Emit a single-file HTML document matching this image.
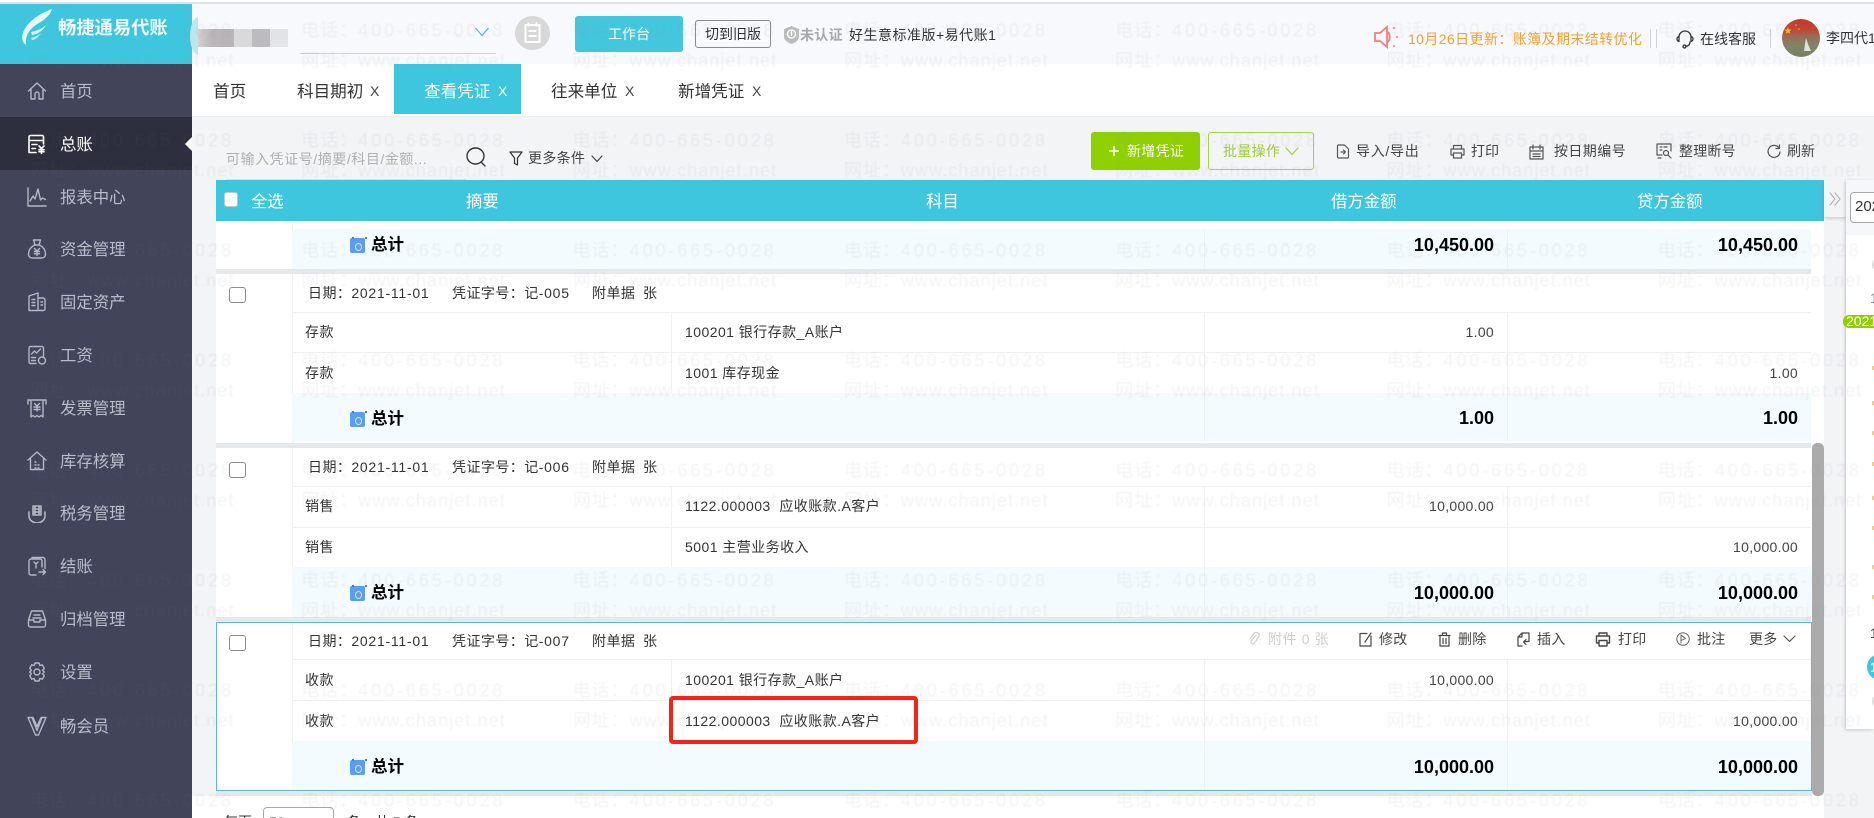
<!DOCTYPE html>
<html lang="zh-CN"><head><meta charset="utf-8"><title>畅捷通易代账</title>
<style>
*{box-sizing:border-box}
html,body{margin:0;padding:0;width:1874px;height:818px;overflow:hidden;background:#fff}
body{position:relative;font-family:"Liberation Sans","Noto Sans CJK SC",sans-serif;font-size:14px;color:#333}
.a{position:absolute}
.t{position:absolute;white-space:nowrap;line-height:20px}
.nav{position:absolute;left:60px;margin-top:.5px;white-space:nowrap;line-height:20px;font-size:16.400px;color:#b9bcc9}
.ni{position:absolute;left:27px;width:20px;height:20px;fill:none;stroke:#b4b7c4;stroke-width:1.4;stroke-linecap:round;stroke-linejoin:round}
.ic{position:absolute;fill:none;stroke:#555;stroke-width:1.2;stroke-linecap:round;stroke-linejoin:round}
.tab{position:absolute;top:81.500px;font-size:16.600px;line-height:20px;white-space:nowrap;color:#333}
.x{position:absolute;top:81px;font-size:14px;line-height:20px;color:#444}
.tb{position:absolute;top:141px;line-height:20px;white-space:nowrap;color:#444;letter-spacing:.7px}
.th{position:absolute;top:191px;font-size:16.400px;line-height:22px;color:#fff;white-space:nowrap}
.hl{position:absolute;left:292px;width:1519px;height:1px;background:#eef0f2}
.vl{position:absolute;width:1px;background:#eef1f3}
.tot{position:absolute;left:292px;width:1519px;background:#f3fbfe}
.gap{position:absolute;left:216px;width:1595px;background:#e6e9ec}
.cb{position:absolute;left:229px;width:17px;height:16px;border:1px solid #8b8b8b;border-radius:3px;background:#fff}
.d{position:absolute;white-space:nowrap;line-height:20px;font-size:14px;color:#333;letter-spacing:.45px}
.dig{letter-spacing:.75px}
.am{position:absolute;white-space:nowrap;line-height:20px;font-size:14px;color:#444;letter-spacing:.3px;text-align:right}
.zj{position:absolute;left:371px;font-size:16.500px;font-weight:700;line-height:20px;color:#000;white-space:nowrap;margin-top:1px}
.ta{position:absolute;font-size:18px;font-weight:700;line-height:22px;color:#000;white-space:nowrap}
.cal{position:absolute;left:350px;width:15px;height:15px;background:#5b9df0;border-radius:2px;margin-top:1px}
.cal:before{content:"";position:absolute;left:5px;top:5px;width:5px;height:6px;border:1px solid #d5e6fb;border-radius:50%}
.cal:after{content:"";position:absolute;left:2px;top:-1px;width:11px;height:2px;border-left:2px solid #3f7fd0;border-right:2px solid #3f7fd0}
.act{position:absolute;top:629px;line-height:20px;white-space:nowrap;color:#444;letter-spacing:.2px}
</style></head><body>

<!-- base layers -->
<div class="a" style="left:0;top:2px;width:1874px;height:2px;background:#dfe1e4"></div>
<div class="a" style="left:192px;top:4px;width:1682px;height:60px;background:#f8f9fc"></div>
<div class="a" style="left:192px;top:117px;width:1682px;height:679px;background:#f3f4f6"></div>
<div class="a" style="left:192px;top:116px;width:1682px;height:1px;background:#ececee"></div>
<div class="a" style="left:1824px;top:796px;width:50px;height:22px;background:#f3f4f6"></div>

<!-- sidebar -->
<div class="a" style="left:0;top:4px;width:192px;height:60px;background:#3dc6dd"></div>
<div class="a" style="left:0;top:64px;width:192px;height:754px;background:#424459"></div>
<div class="a" style="left:0;top:117px;width:192px;height:53px;background:#2d2f3e"></div>
<div class="a" style="left:185px;top:137px;width:0;height:0;border-top:7px solid transparent;border-bottom:7px solid transparent;border-right:7px solid #fff"></div>
<svg class="a" style="left:18px;top:6px" width="40" height="42" viewBox="18 6 40 42">
<path d="M52 9C41 13 27 21 23 33C21 39 23 43 26 45C25 38 28 30 36 25C44 20 50 16 52 9Z" fill="#fff" opacity=".88"/>
<path d="M31 32C37 31 43 28 46 25C43 31 38 34 32 35Z" fill="#fff" opacity=".8"/>
<path d="M31 38C35 37 39 35 41 33C39 37 35 40 32 40Z" fill="#fff" opacity=".7"/>
</svg>
<div class="t" style="left:58px;top:18px;font-size:18.300px;font-weight:700;color:#fff;opacity:.92">畅捷通易代账</div>

<svg class="ni" style="top:81px" viewBox="0 0 20 20"><path d="M1.500 10L10 2l8.500 8M4 8.500V18h4v-5a2 2 0 0 1 4 0v5h4V8.500"/></svg>
<div class="nav" style="top:81px">首页</div>
<svg class="ni" style="top:134px;stroke:#fff;stroke-width:1.6" viewBox="0 0 20 20"><path d="M2 18V3a1.500 1.500 0 0 1 1.500-1.500H15A1.500 1.500 0 0 1 16.500 3v7M2 6.500h14.500M5 10.500h5M5 14.500h3.500M2 18.500h7M12 12l2.500 2.500L17 12M14.500 14.500V19.500M12 15.700h5M12 17.700h5"/></svg>
<div class="nav" style="top:134px;color:#fff">总账</div>
<svg class="ni" style="top:187px" viewBox="0 0 20 20"><path d="M1 1v18h18M3 14l3-5 2 3 3-10 2.500 11 2-2 3 1.500"/></svg>
<div class="nav" style="top:187px">报表中心</div>
<svg class="ni" style="top:239px" viewBox="0 0 20 20"><path d="M6.500 1h7l-1.500 5h-4zM7.500 6C3 8.500 1.500 12 1.500 15c0 3 2 4 4 4h9c2 0 4-1 4-4 0-3-1.500-6.500-6-9M7.500 9.500l2.500 2.500 2.500-2.500M10 12v4.500M7.500 12.500h5M7.500 14.700h5"/></svg>
<div class="nav" style="top:239px">资金管理</div>
<svg class="ni" style="top:292px" viewBox="0 0 20 20"><path d="M2 18.500V4l9-3v17.500zM11 6h5a2 2 0 0 1 2 2v9a1.500 1.500 0 0 1-1.500 1.500H3M5 7.500h3M5 10.500h3M5 13.500h3M14 10h1.500M14 13h1.500"/></svg>
<div class="nav" style="top:292px">固定资产</div>
<svg class="ni" style="top:345px" viewBox="0 0 20 20"><path d="M9 18.500H3.500A1.500 1.500 0 0 1 2 17V3a1.500 1.500 0 0 1 1.500-1.500H15A1.500 1.500 0 0 1 16.500 3v8M4.500 9l3-3 2 2 4-4M4.500 12.500h4M4.500 15.500h4"/><circle cx="15" cy="15.500" r="3.500"/></svg>
<div class="nav" style="top:345px">工资</div>
<svg class="ni" style="top:398px" viewBox="0 0 20 20"><path d="M1 6V2h18v4M4 2v17l2-1.500 2 1.500 2-1.500 2 1.500 2-1.500 2 1.500V2M7.500 5.500l2.500 2.500 2.500-2.500M10 8v5M7 9h6M7 11.500h6"/></svg>
<div class="nav" style="top:398px">发票管理</div>
<svg class="ni" style="top:451px" viewBox="0 0 20 20"><path d="M1 9l9-8 9 8M3.500 8v10.500h13V8M8 11h1M8 14h1M8 17h1M11 14h1M11 17h1"/></svg>
<div class="nav" style="top:451px">库存核算</div>
<svg class="ni" style="top:503px" viewBox="0 0 20 20"><path d="M2 9v4a7.500 6.500 0 0 0 16 0V9M6 3h8v9H6zM8 3v9M12 3v9M6 6h8M6 9h8" stroke-width="1.600"/></svg>
<div class="nav" style="top:503px">税务管理</div>
<svg class="ni" style="top:556px" viewBox="0 0 20 20"><path d="M5 1.500h11a2 2 0 0 1 2 2v9M2 5v12a2 2 0 0 0 2 2h5M2 5a2 2 0 0 1 2-2h9a2 2 0 0 1 2 2v6M7 6l2 2 2-2M9 8v4M12 16h6M16 13.500l2.500 2.500-2.500 2.500"/></svg>
<div class="nav" style="top:556px">结账</div>
<svg class="ni" style="top:609px" viewBox="0 0 20 20"><path d="M4.500 2h11l3 9v5a2 2 0 0 1-2 2h-13a2 2 0 0 1-2-2v-5zM1.500 11h5.500v2h6v-2h5.500M7 6h6M6 9h8"/></svg>
<div class="nav" style="top:609px">归档管理</div>
<svg class="ni" style="top:662px" viewBox="0 0 20 20"><path d="M8 1h4l.8 2.500 2.500-.7 2 3.500-1.800 2L17.300 10l-1.800 1.700 1.800 2-2 3.500-2.500-.7L12 19H8l-.8-2.500-2.500.7-2-3.500 1.800-2L2.700 10l1.800-1.700-1.800-2 2-3.500 2.500.7z"/><circle cx="10" cy="10" r="3"/></svg>
<div class="nav" style="top:662px">设置</div>
<svg class="ni" style="top:716px" viewBox="0 0 20 20"><path d="M1 1.500h4l5 13 5-13h4L11.500 19h-3zM6 1.500l4 9 4-9"/></svg>
<div class="nav" style="top:716px">畅会员</div>

<!-- header -->
<div class="a" style="left:190px;top:17px;width:17px;height:38px;border-radius:50%;background:#bfe6ee;clip-path:inset(0 9px 0 0)"></div>
<div class="a" style="left:198px;top:29px;width:36px;height:18px;background:linear-gradient(90deg,#d2d0d2,#b9b5b8 40%,#b8b4b7)"></div>
<div class="a" style="left:234px;top:29px;width:18px;height:18px;background:#d9d9db"></div>
<div class="a" style="left:252px;top:29px;width:18px;height:18px;background:#bcbcbf"></div>
<div class="a" style="left:270px;top:29px;width:18px;height:18px;background:#e2e3e6"></div>
<div class="a" style="left:300px;top:53px;width:196px;height:1px;background:#cfd2d6"></div>
<svg class="a" style="left:474px;top:27px" width="16" height="10" viewBox="0 0 16 10"><path d="M1.500 1l6.500 7.500L14.500 1" fill="none" stroke="#4cbdd0" stroke-width="1.200"/></svg>
<svg class="a" style="left:515px;top:16px" width="35" height="34" viewBox="0 0 35 34"><ellipse cx="17.500" cy="17" rx="17.500" ry="17" fill="#d8d8d8"/><path d="M10.500 9h14v17h-14zM13.500 6.500v4M21.500 6.500v4M13.500 15h8M13.500 20h8" fill="none" stroke="#fff" stroke-width="2"/></svg>
<div class="a" style="left:575px;top:16px;width:108px;height:36px;background:#3dc6dd;border-radius:3px;color:#fff;text-align:center;line-height:36px;font-size:14px;opacity:.97">工作台</div>
<div class="a" style="left:695px;top:20px;width:76px;height:28px;border:1px solid #8a8a8a;border-radius:3px;text-align:center;line-height:26px;font-size:14px;color:#333">切到旧版</div>
<svg class="a" style="left:784px;top:26px" width="15" height="18" viewBox="0 0 15 18"><path d="M7.500 0L15 3v8c0 3-4 6-7.500 7C4 17 0 14 0 11V3z" fill="#bcbcbc"/><circle cx="7.500" cy="8" r="4" fill="none" stroke="#fff" stroke-width="1.300"/><path d="M7.500 5v5" stroke="#fff" stroke-width="1.300"/></svg>
<div class="t" style="left:800px;top:25px;color:#a8a8a8;font-weight:700;letter-spacing:.3px">未认证</div>
<div class="t" style="left:849px;top:25px;color:#333;letter-spacing:.5px">好生意标准版+易代账1</div>

<svg class="a" style="left:1374px;top:25px" width="26" height="24" viewBox="0 0 26 24"><path d="M1 8h5l7-6v20l-7-6H1zM13.500 7c3 2 3 8 0 10" fill="none" stroke="#ef7f7f" stroke-width="1.800"/><circle cx="20" cy="3" r="1" fill="#ef7f7f"/><circle cx="23" cy="12" r="1" fill="#ef7f7f"/><circle cx="20" cy="21" r="1" fill="#ef7f7f"/></svg>
<div class="t" style="left:1408px;top:29px;color:#f3a02e;letter-spacing:.4px">10月26日更新：账簿及期末结转优化</div>
<div class="a" style="left:1650px;top:29px;width:1px;height:19px;background:#d0d2d6"></div>
<div class="a" style="left:1656px;top:29px;width:1px;height:19px;background:#d0d2d6"></div>
<svg class="ic" style="left:1676px;top:29px;stroke:#333;stroke-width:1.300" width="18" height="20" viewBox="0 0 18 20"><path d="M3 11V8a6 6 0 0 1 12 0v3M3 7.500C1.500 8 1 9 1 10s.5 2 2 2.500zM15 7.500c1.500.5 2 1.500 2 2.500s-.5 2-2 2.500zM14 13c0 3-2 4-4 4.500"/><circle cx="8.500" cy="17.500" r="1.500"/></svg>
<div class="t" style="left:1700px;top:29px;color:#333">在线客服</div>
<div class="a" style="left:1770px;top:29px;width:1px;height:19px;background:#d0d2d6"></div>
<svg class="a" style="left:1782px;top:19px" width="38" height="38" viewBox="0 0 38 38"><defs><linearGradient id="av" x1="0" y1="0" x2="0" y2="1"><stop offset="0" stop-color="#cf3526"/><stop offset=".3" stop-color="#bb4a35"/><stop offset=".5" stop-color="#96705a"/><stop offset=".7" stop-color="#7f8468"/><stop offset="1" stop-color="#76805f"/></linearGradient></defs><circle cx="19" cy="19" r="19" fill="url(#av)"/><path d="M6 8l1 2.500 2.600.2-2 1.700.7 2.600L6 13.500l-2.300 1.500.7-2.600-2-1.700 2.600-.2z" fill="#e9b73b"/><circle cx="14" cy="6" r=".8" fill="#e9b73b"/><circle cx="17" cy="10" r=".8" fill="#e9b73b"/><path d="M24 19l2 6 3 7h-7l1-7z" fill="#dfe3da"/></svg>
<div class="t" style="left:1826px;top:28px;color:#333;font-size:14px">李四代1</div>

<!-- tabs -->
<div class="tab" style="left:213px">首页</div>
<div class="tab" style="left:297px">科目期初</div><div class="x" style="left:370px">X</div>
<div class="a" style="left:394px;top:64px;width:127px;height:50px;background:#3dc6dd"></div>
<div class="tab" style="left:424px;color:#fff">查看凭证</div><div class="x" style="left:498px;color:#fff">X</div>
<div class="tab" style="left:551px">往来单位</div><div class="x" style="left:625px">X</div>
<div class="tab" style="left:678px">新增凭证</div><div class="x" style="left:752px">X</div>

<!-- toolbar -->
<div class="t" style="left:226px;top:149px;font-size:14px;letter-spacing:.55px;color:#b0b0b0">可输入凭证号/摘要/科目/金额...</div>
<div class="a" style="left:226px;top:179px;width:240px;height:1px;background:#dcdde0"></div>
<svg class="ic" style="left:466px;top:147px;stroke:#333;stroke-width:1.400" width="21" height="20" viewBox="0 0 21 20"><ellipse cx="9.500" cy="9" rx="8.500" ry="8"/><path d="M15 15l4 4"/></svg>
<svg class="ic" style="left:509px;top:151px;stroke:#333" width="14" height="15" viewBox="0 0 14 15"><path d="M1 1h12L8.500 7v7l-3-1.500V7z"/></svg>
<div class="t" style="left:528px;top:148px;color:#444;letter-spacing:.3px">更多条件</div>
<svg class="ic" style="left:591px;top:155px;stroke:#444" width="12" height="8" viewBox="0 0 12 8"><path d="M1 1l5 5.500L11 1"/></svg>

<div class="a" style="left:1091px;top:132px;width:109px;height:38px;background:#8fd100;border-radius:3px"></div>
<svg class="a" style="left:1107px;top:144px" width="14" height="14" viewBox="0 0 14 14"><path d="M7 2v10M2 7h10" stroke="#fff" stroke-width="1.500"/></svg>
<div class="t" style="left:1127px;top:141px;color:#fff;letter-spacing:.3px">新增凭证</div>
<div class="a" style="left:1208px;top:132px;width:106px;height:38px;border:1px solid #a3d34a;border-radius:3px"></div>
<div class="t" style="left:1223px;top:141px;color:#a0cb40;letter-spacing:.3px">批量操作</div>
<svg class="ic" style="left:1285px;top:147px;stroke:#a0cb40" width="14" height="9" viewBox="0 0 14 9"><path d="M1 1l6 6.500L13 1"/></svg>

<svg class="ic" style="left:1336px;top:144px" width="14" height="15" viewBox="0 0 14 15"><path d="M12.500 5v8a1 1 0 0 1-1 1h-9a1 1 0 0 1-1-1V2a1 1 0 0 1 1-1h6zM5 8h4M7.500 6l2 2-2 2"/></svg>
<div class="tb" style="left:1356px">导入/导出</div>
<svg class="ic" style="left:1450px;top:144px" width="15" height="15" viewBox="0 0 15 15"><path d="M3.500 5V1.500h8V5M3.500 11H1V5h13v6h-2.500M3.500 9h8v5h-8z"/></svg>
<div class="tb" style="left:1471px;letter-spacing:0">打印</div>
<svg class="ic" style="left:1529px;top:144px" width="15" height="16" viewBox="0 0 15 16"><path d="M1 3h13v12H1zM4 1v4M11 1v4M1 7h13M4 10h7M4 12.500h7"/></svg>
<div class="tb" style="left:1554px;letter-spacing:.4px">按日期编号</div>
<svg class="ic" style="left:1656px;top:143px" width="17" height="16" viewBox="0 0 17 16"><path d="M1 12V1h14v7M1 12h5M4 4h2M8 4h3M4 7h2"/><circle cx="10" cy="10" r="2.500"/><path d="M12 12l3 3M2 15h3"/></svg>
<div class="tb" style="left:1679px;letter-spacing:.2px">整理断号</div>
<svg class="ic" style="left:1767px;top:144px" width="14" height="15" viewBox="0 0 14 15"><path d="M12 4A6 6 0 1 0 13 8M12.500 1v3.500H9"/></svg>
<div class="tb" style="left:1787px;letter-spacing:0">刷新</div>

<!-- table -->
<div class="a" style="left:216px;top:221px;width:1608px;height:575px;background:#fff"></div>
<div class="a" style="left:216px;top:180px;width:1608px;height:41px;background:#3dc6dd"></div>
<div class="a" style="left:224px;top:192px;width:14px;height:15px;background:#fff;border-radius:3px;border:1px solid #c8c8c8"></div>
<div class="th" style="left:251px">全选</div>
<div class="th" style="left:466px">摘要</div>
<div class="th" style="left:926px">科目</div>
<div class="th" style="left:1331px">借方金额</div>
<div class="th" style="left:1637px">贷方金额</div>

<!-- collapse tab + right panel -->
<div class="a" style="left:1824px;top:180px;width:22px;height:37px;background:#f3f4f6;box-shadow:0 2px 3px rgba(0,0,0,.14)"></div>
<svg class="ic" style="left:1829px;top:191px;stroke:#b0b3b8" width="12" height="16" viewBox="0 0 12 16"><path d="M1 2l5 6-5 6M6 2l5 6-5 6"/></svg>
<div class="a" style="left:1846px;top:180px;width:28px;height:549px;background:#fff;box-shadow:-1px 1px 3px rgba(0,0,0,.18)"></div>
<div class="a" style="left:1846px;top:180px;width:28px;height:55px;background:#f6f7fa"></div>
<div class="a" style="left:1850px;top:192px;width:40px;height:31px;border:1px solid #a8a8a8;border-radius:4px;background:#fff"></div>
<div class="t" style="left:1855px;top:197px;font-size:15px;color:#333">2021</div>
<div class="a" style="left:1872px;top:257px;width:16px;height:15px;border-radius:50%;background:#dcdcdc"></div>
<div class="t" style="left:1870px;top:288px;color:#8a93a0">1</div>
<div class="a" style="left:1843px;top:315px;width:31px;height:13px;background:#8fd100;border-radius:6px 0 0 6px;overflow:hidden;color:#fff;font-size:14px;line-height:13px;padding-left:3px">2021</div>
<div class="a" style="left:1872px;top:366px;width:2px;height:4px;background:#f4c98a"></div>
<div class="a" style="left:1872px;top:401px;width:2px;height:4px;background:#f4c98a"></div>
<div class="a" style="left:1872px;top:431px;width:2px;height:4px;background:#f4c98a"></div>
<div class="a" style="left:1872px;top:462px;width:2px;height:4px;background:#f4c98a"></div>
<div class="a" style="left:1872px;top:496px;width:2px;height:4px;background:#f4c98a"></div>
<div class="a" style="left:1872px;top:526px;width:2px;height:4px;background:#f4c98a"></div>
<div class="a" style="left:1872px;top:565px;width:2px;height:4px;background:#f4c98a"></div>
<div class="a" style="left:1872px;top:595px;width:2px;height:4px;background:#f4c98a"></div>
<div class="t" style="left:1870px;top:623px;color:#444">1</div>
<div class="a" style="left:1867px;top:654px;width:26px;height:26px;border-radius:50%;background:#3dc6dd;color:#fff;line-height:26px;padding-left:3px;font-weight:700">1</div>
<div class="a" style="left:1872px;top:693px;width:16px;height:16px;border-radius:50%;background:#dcdcdc"></div>

<!-- vertical column lines -->
<div class="vl" style="left:292px;top:221px;height:569px;background:#eef0f2"></div>
<div class="vl" style="left:671px;top:312px;height:81px"></div>

<!-- group 1 total -->
<div class="tot" style="top:229px;height:40px"></div>
<div class="vl" style="left:1204px;top:229px;height:40px"></div>
<div class="vl" style="left:1507px;top:229px;height:40px"></div>
<div class="cal" style="top:237px"></div>
<div class="zj" style="top:234px">总计</div>
<div class="ta" style="right:380px;top:234px">10,450.00</div>
<div class="ta" style="right:76px;top:234px">10,450.00</div>
<div class="gap" style="top:269px;height:5px"></div>

<!-- group 2 -->
<div class="cb" style="top:287px"></div>
<div class="d" style="left:308px;top:283px">日期：<span class="dig">2021-11-01</span></div>
<div class="d" style="left:452px;top:283px">凭证字号：记<span class="dig">-005</span></div>
<div class="d" style="left:592px;top:283px">附单据</div>
<div class="d" style="left:643px;top:283px">张</div>
<div class="hl" style="top:312px"></div>
<div class="d" style="left:305px;top:322px">存款</div>
<div class="d" style="left:685px;top:322px">100201 银行存款_A账户</div>
<div class="am" style="right:380px;top:322px">1.00</div>
<div class="hl" style="top:352px"></div>
<div class="d" style="left:305px;top:363px">存款</div>
<div class="d" style="left:685px;top:363px">1001 库存现金</div>
<div class="am" style="right:76px;top:363px">1.00</div>
<div class="vl" style="left:1204px;top:312px;height:81px"></div>
<div class="vl" style="left:1507px;top:312px;height:81px"></div>
<div class="tot" style="top:393px;height:48px"></div>
<div class="vl" style="left:1204px;top:393px;height:48px"></div>
<div class="vl" style="left:1507px;top:393px;height:48px"></div>
<div class="cal" style="top:411px"></div>
<div class="zj" style="top:408px">总计</div>
<div class="ta" style="right:380px;top:407px">1.00</div>
<div class="ta" style="right:76px;top:407px">1.00</div>
<div class="gap" style="top:443px;height:5px"></div>

<!-- group 3 -->
<div class="cb" style="top:462px"></div>
<div class="d" style="left:308px;top:457px">日期：<span class="dig">2021-11-01</span></div>
<div class="d" style="left:452px;top:457px">凭证字号：记<span class="dig">-006</span></div>
<div class="d" style="left:592px;top:457px">附单据</div>
<div class="d" style="left:643px;top:457px">张</div>
<div class="hl" style="top:486px"></div>
<div class="d" style="left:305px;top:496px">销售</div>
<div class="d" style="left:685px;top:496px">1122.000003&nbsp; 应收账款.A客户</div>
<div class="am" style="right:380px;top:496px">10,000.00</div>
<div class="hl" style="top:527px"></div>
<div class="d" style="left:305px;top:537px">销售</div>
<div class="d" style="left:685px;top:537px">5001 主营业务收入</div>
<div class="am" style="right:76px;top:537px">10,000.00</div>
<div class="vl" style="left:671px;top:486px;height:81px"></div>
<div class="vl" style="left:1204px;top:486px;height:81px"></div>
<div class="vl" style="left:1507px;top:486px;height:81px"></div>
<div class="tot" style="top:567px;height:50px"></div>
<div class="vl" style="left:1204px;top:567px;height:50px"></div>
<div class="vl" style="left:1507px;top:567px;height:50px"></div>
<div class="cal" style="top:585px"></div>
<div class="zj" style="top:582px">总计</div>
<div class="ta" style="right:380px;top:582px">10,000.00</div>
<div class="ta" style="right:76px;top:582px">10,000.00</div>
<div class="gap" style="top:617px;height:5px"></div>

<!-- group 4 selected -->
<div class="cb" style="top:635px"></div>
<div class="d" style="left:308px;top:631px">日期：<span class="dig">2021-11-01</span></div>
<div class="d" style="left:452px;top:631px">凭证字号：记<span class="dig">-007</span></div>
<div class="d" style="left:592px;top:631px">附单据</div>
<div class="d" style="left:643px;top:631px">张</div>
<div class="hl" style="top:659px"></div>
<div class="d" style="left:305px;top:670px">收款</div>
<div class="d" style="left:685px;top:670px">100201 银行存款_A账户</div>
<div class="am" style="right:380px;top:670px">10,000.00</div>
<div class="hl" style="top:700px"></div>
<div class="d" style="left:305px;top:711px">收款</div>
<div class="d" style="left:685px;top:711px">1122.000003&nbsp; 应收账款.A客户</div>
<div class="am" style="right:76px;top:711px">10,000.00</div>
<div class="vl" style="left:671px;top:659px;height:82px"></div>
<div class="vl" style="left:1204px;top:659px;height:82px"></div>
<div class="vl" style="left:1507px;top:659px;height:82px"></div>
<div class="tot" style="top:741px;height:49px"></div>
<div class="vl" style="left:1204px;top:741px;height:49px"></div>
<div class="vl" style="left:1507px;top:741px;height:49px"></div>
<div class="cal" style="top:759px"></div>
<div class="zj" style="top:756px">总计</div>
<div class="ta" style="right:380px;top:756px">10,000.00</div>
<div class="ta" style="right:76px;top:756px">10,000.00</div>
<div class="a" style="left:216px;top:622px;width:1596px;height:169px;border:1px solid #5bbccb"></div>
<div class="a" style="left:216px;top:791px;width:1596px;height:5px;background:#e6e9ec"></div>

<!-- row actions -->
<svg class="ic" style="left:1248px;top:632px;stroke:#cfcfcf" width="13" height="14" viewBox="0 0 13 14"><path d="M8 3L3 9a2 2 0 0 0 3 2.500l5-7A3 3 0 0 0 6.500 1L2 7"/></svg>
<div class="act" style="left:1268px;color:#cdcdcd;letter-spacing:.6px">附件 0 张</div>
<svg class="ic" style="left:1359px;top:632px;stroke:#444" width="13" height="15" viewBox="0 0 13 15"><path d="M8 1.500H1v12.500h11V4M12 1L6 10"/></svg>
<div class="act" style="left:1379px">修改</div>
<svg class="ic" style="left:1438px;top:632px;stroke:#444" width="13" height="15" viewBox="0 0 13 15"><path d="M1 3.500h11M4.500 3.500V1h4v2.500M2 3.500V14h9V3.500M5 6.500v5M8 6.500v5"/></svg>
<div class="act" style="left:1458px">删除</div>
<svg class="ic" style="left:1517px;top:632px;stroke:#444" width="14" height="15" viewBox="0 0 14 15"><path d="M5 14H1V5l4-4h7v8M5 1v4H1M12 9.500H7M9 7.500L6.500 10 9 12.500"/></svg>
<div class="act" style="left:1537px">插入</div>
<svg class="ic" style="left:1595px;top:632px;stroke:#444;stroke-width:1.400" width="16" height="15" viewBox="0 0 16 15"><path d="M4 4V1h8v3M4 11H1.500V4h13v7H12M4 8.500h8V14H4z"/></svg>
<div class="act" style="left:1618px">打印</div>
<svg class="ic" style="left:1676px;top:632px;stroke:#555;stroke-width:.9" width="14" height="14" viewBox="0 0 14 14"><circle cx="7" cy="7" r="6.200"/><path d="M5 11V3l4.500 3.500L5 8.500"/></svg>
<div class="act" style="left:1697px">批注</div>
<div class="act" style="left:1749px">更多</div>
<svg class="ic" style="left:1783px;top:635px;stroke:#555" width="13" height="8" viewBox="0 0 13 8"><path d="M1 1l5.500 5.500L12 1"/></svg>

<!-- red annotation -->
<div class="a" style="left:669px;top:696px;width:249px;height:48px;border:4px solid #f5211b;border-radius:4px"></div>

<!-- scrollbar -->
<div class="a" style="left:1812px;top:443px;width:12px;height:353px;background:#ababab;border-radius:5px"></div>

<!-- pagination -->
<div class="t" style="left:224px;top:812px;color:#333">每页</div>
<div class="a" style="left:263px;top:807px;width:71px;height:30px;border:1px solid #a8a8a8;border-radius:4px;background:#fff"></div>
<div class="t" style="left:269px;top:812px;color:#333">50</div>
<div class="t" style="left:347px;top:812px;color:#333">条，共 5 条</div>

<!-- watermark -->
<svg class="a" style="left:0;top:0;pointer-events:none;filter:blur(.5px)" width="1874" height="818">
<defs><pattern id="wm" patternUnits="userSpaceOnUse" x="30" y="0" width="271.300" height="110">
<text x="0" y="36.500" font-family="'Liberation Sans','Noto Sans CJK SC',sans-serif" font-size="18" letter-spacing="1" fill="#9696a0">电话：<tspan letter-spacing="2.900">400-665-0028</tspan></text>
<text x="0" y="66.500" font-family="'Liberation Sans','Noto Sans CJK SC',sans-serif" font-size="18" letter-spacing="1" fill="#9696a0">网址：<tspan letter-spacing="1.100">www.chanjet.net</tspan></text>
</pattern></defs>
<rect x="0" width="192" height="818" fill="url(#wm)" opacity=".05"/>
<rect x="192" width="1682" height="818" fill="url(#wm)" opacity=".105"/>
</svg>
</body></html>
